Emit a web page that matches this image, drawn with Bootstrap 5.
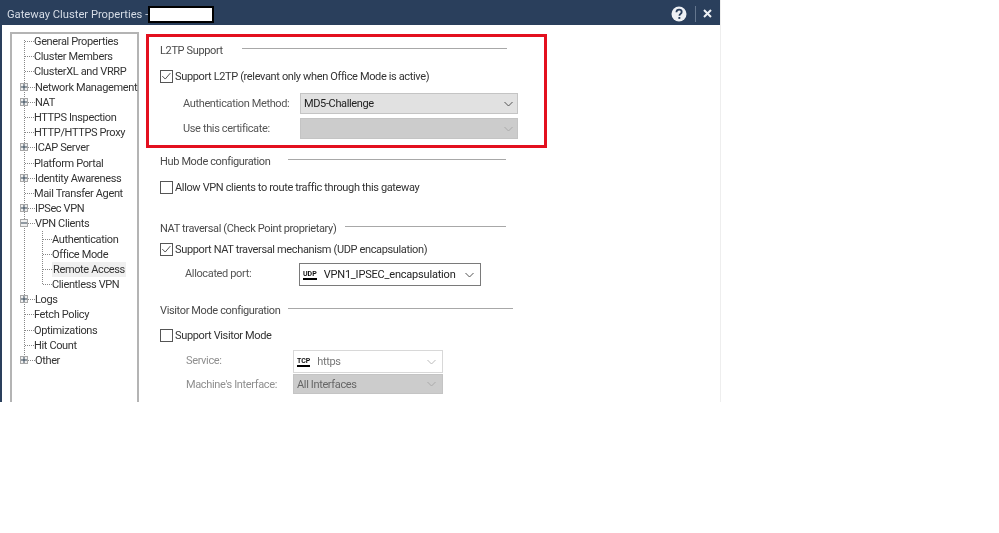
<!DOCTYPE html>
<html lang="en">
<head>
<meta charset="utf-8">
<title>Gateway Cluster Properties</title>
<link rel="stylesheet" href="https://cdn.jsdelivr.net/npm/bootstrap@5.3.0/dist/css/bootstrap.min.css">
<style>
html,body{background:#fff;margin:0;overflow:hidden}
body{font-family:Roboto,"Noto Sans",sans-serif;font-size:11px;color:#333;line-height:15px;letter-spacing:-.36px}
.gw-win{width:721px;height:402px;overflow:hidden;border-left:2px solid #2a3f5c;background:#fff;border-right:1px solid #eee;filter:blur(.35px)}
.gw-title{height:25px;background:#2a3f5c;color:#d5dce6;font-size:11.2px;letter-spacing:0;margin-left:-2px;padding-left:7px}
.gw-title-text{padding-top:3px}
.gw-redact{width:62px;height:13px;background:#fff;border:solid #000;border-width:2px;box-sizing:content-box;margin-left:0;margin-top:4px}
.gw-tools{margin-left:auto;margin-right:8px;padding-top:2px}
.gw-sep{width:1px;height:16px;background:#64768e;margin:0 7px 0 8px}
.gw-body{height:377px}
.gw-tree{width:129px;margin:7px 0 0 8px;border:solid #b4b4b4;border-width:2px 2px 0 2px;flex:none;position:relative}
.gw-vline{border-left:1px dotted #888;margin-left:12px;height:319px;position:absolute;top:6px;left:0}
.gw-node{height:15.2px;display:flex;align-items:center;position:relative;padding-left:13px;white-space:nowrap}
.gw-twig{width:9px;border-top:1px dotted #888;flex:none}
.gw-exp + .gw-twig{width:10px}
.gw-exp{position:absolute;left:8px;top:3px;width:8px;height:8px;background:#f0f0f0;border:1px solid #a8a8a8;display:flex;align-items:center;justify-content:center}
.gw-exp svg{display:block}
.gw-sub{position:relative}
.gw-sub .gw-node{padding-left:31px}
.gw-sub::before{content:"";position:absolute;left:30px;top:0;height:53px;border-left:1px dotted #888}
.gw-sel{background:#f0f0f0;padding:0 1px}
.gw-main{margin-left:7px;padding-top:9px;flex:1;min-width:0}
.gw-redbox{width:401px;height:114px;border:3px solid #e3101f;padding:6px 10px 0 11px}
.gw-head{display:flex;align-items:center;color:#4a4a4a;height:15px;white-space:nowrap}
.gw-head i{display:block;height:1px;background:#a8a8a8;flex:none;position:relative;top:-2px;margin-left:auto}
.gw-h-l2tp{width:347px}.gw-h-l2tp i{width:265px}
.gw-h-hub{width:346px}.gw-h-hub i{width:218px}
.gw-h-nat{width:346px}.gw-h-nat i{width:161px}
.gw-h-vis{width:353px}.gw-h-vis i{width:225px}
.gw-chk{width:13px;height:13px;border:1px solid #555;background:#fff;flex:none;margin-right:2px;display:block}
.gw-chkrow{display:flex;align-items:center;height:15px;color:#333;white-space:nowrap;margin-top:11px}
.gw-chkrow-tight{margin-top:6px}
.gw-chkrow-vis{margin-top:10px}
.gw-frow{display:flex;align-items:center;white-space:nowrap}
.gw-f-auth{margin-top:9px;padding-left:23px}
.gw-f-cert{margin-top:4px;padding-left:23px}
.gw-f-port{margin-top:6px;padding-left:25px}
.gw-f-serv{margin-top:7px;padding-left:26px}
.gw-f-mach{margin-top:1px;padding-left:26px}
.gw-lab{color:#555;flex:none}
.gw-lab-a{width:117px}
.gw-lab-b{width:114px;padding-bottom:3px}
.gw-lab-c{width:107px;padding-bottom:3px}
.gw-lab-d{width:107px}
.gw-sel-box{height:21px;border:1px solid #c8c8c8;display:flex;align-items:center;padding:0 3px;position:relative;flex:none;color:#222}
.gw-w-a{width:218px;padding-right:4px}.gw-w-b{width:182px;padding-right:6px}.gw-w-c{width:150px;padding-right:6px}
.gw-h20{height:20px}
.gw-sel-box svg.gw-ch{margin-left:auto;flex:none}
.gw-grey{background:#e1e1e1;border-color:#c4c4c4}
.gw-dis{background:#ccc;border-color:#c4c4c4;color:#666}
.gw-open{background:#fff;border-color:#7a7a7a;height:23px;letter-spacing:-.2px}
.gw-light{background:#fff;border-color:#d8d8d8;color:#777;height:23px}
.gw-proto{font-size:7px;font-weight:700;border-bottom:2px solid #000;line-height:8px;color:#111;margin-right:7px;flex:none;letter-spacing:0}
.gw-sec{padding-left:14px}
.gw-sec-hub{margin-top:6px}.gw-sec-nat{margin-top:26px}.gw-sec-vis{margin-top:17px}
.gw-faint{color:#8f8f8f}
</style>
</head>
<body>
<div class="gw-win d-flex flex-column">
  <div class="gw-title d-flex align-items-center">
    <span class="gw-title-text">Gateway Cluster Properties -</span><span class="gw-redact d-block"></span>
    <div class="gw-tools d-flex align-items-center">
      <svg width="16" height="16" viewBox="0 0 16 16"><circle cx="8" cy="8" r="7.5" fill="#eef1f5"/><path d="M5.4 6.2C5.5 4.6 6.6 3.7 8.1 3.7c1.5 0 2.6 .9 2.6 2.2 0 1-.6 1.5-1.3 2-.6.4-.9.8-.9 1.5v.3" fill="none" stroke="#2a3f5c" stroke-width="1.8"/><rect x="7.4" y="11" width="1.9" height="1.9" fill="#2a3f5c"/></svg>
      <span class="gw-sep"></span>
      <svg width="9" height="9" viewBox="0 0 9 9"><path d="M1 1l7 7M8 1l-7 7" stroke="#eef1f5" stroke-width="2"/></svg>
    </div>
  </div>
  <div class="gw-body d-flex">
    <div class="gw-tree">
      <div class="gw-vline"></div>
      <div class="gw-node"><span class="gw-twig"></span><span>General Properties</span></div>
      <div class="gw-node"><span class="gw-twig"></span><span>Cluster Members</span></div>
      <div class="gw-node"><span class="gw-twig"></span><span>ClusterXL and VRRP</span></div>
      <div class="gw-node"><span class="gw-exp"><svg width="6" height="6" viewBox="0 0 6 6"><path d="M0 3h6M3 0v6" stroke="#345" stroke-width="1"/></svg></span><span class="gw-twig"></span><span>Network Management</span></div>
      <div class="gw-node"><span class="gw-exp"><svg width="6" height="6" viewBox="0 0 6 6"><path d="M0 3h6M3 0v6" stroke="#345" stroke-width="1"/></svg></span><span class="gw-twig"></span><span>NAT</span></div>
      <div class="gw-node"><span class="gw-twig"></span><span>HTTPS Inspection</span></div>
      <div class="gw-node"><span class="gw-twig"></span><span>HTTP/HTTPS Proxy</span></div>
      <div class="gw-node"><span class="gw-exp"><svg width="6" height="6" viewBox="0 0 6 6"><path d="M0 3h6M3 0v6" stroke="#345" stroke-width="1"/></svg></span><span class="gw-twig"></span><span>ICAP Server</span></div>
      <div class="gw-node"><span class="gw-twig"></span><span>Platform Portal</span></div>
      <div class="gw-node"><span class="gw-exp"><svg width="6" height="6" viewBox="0 0 6 6"><path d="M0 3h6M3 0v6" stroke="#345" stroke-width="1"/></svg></span><span class="gw-twig"></span><span>Identity Awareness</span></div>
      <div class="gw-node"><span class="gw-twig"></span><span>Mail Transfer Agent</span></div>
      <div class="gw-node"><span class="gw-exp"><svg width="6" height="6" viewBox="0 0 6 6"><path d="M0 3h6M3 0v6" stroke="#345" stroke-width="1"/></svg></span><span class="gw-twig"></span><span>IPSec VPN</span></div>
      <div class="gw-node"><span class="gw-exp"><svg width="6" height="6" viewBox="0 0 6 6"><path d="M0 3h6" stroke="#345" stroke-width="1"/></svg></span><span class="gw-twig"></span><span>VPN Clients</span></div>
      <div class="gw-sub">
        <div class="gw-node"><span class="gw-twig"></span><span>Authentication</span></div>
        <div class="gw-node"><span class="gw-twig"></span><span>Office Mode</span></div>
        <div class="gw-node"><span class="gw-twig"></span><span class="gw-sel">Remote Access</span></div>
        <div class="gw-node"><span class="gw-twig"></span><span>Clientless VPN</span></div>
      </div>
      <div class="gw-node"><span class="gw-exp"><svg width="6" height="6" viewBox="0 0 6 6"><path d="M0 3h6M3 0v6" stroke="#345" stroke-width="1"/></svg></span><span class="gw-twig"></span><span>Logs</span></div>
      <div class="gw-node"><span class="gw-twig"></span><span>Fetch Policy</span></div>
      <div class="gw-node"><span class="gw-twig"></span><span>Optimizations</span></div>
      <div class="gw-node"><span class="gw-twig"></span><span>Hit Count</span></div>
      <div class="gw-node"><span class="gw-exp"><svg width="6" height="6" viewBox="0 0 6 6"><path d="M0 3h6M3 0v6" stroke="#345" stroke-width="1"/></svg></span><span class="gw-twig"></span><span>Other</span></div>
    </div>
    <div class="gw-main">
      <div class="gw-redbox">
        <div class="gw-head gw-h-l2tp"><span>L2TP Support</span><i></i></div>
        <div class="gw-chkrow"><svg class="gw-chk" viewBox="0 0 13 13"><path d="M1.5 6l3.5 3.5L11 2.5" fill="none" stroke="#444" stroke-width="1.1"/></svg><span>Support L2TP (relevant only when Office Mode is active)</span></div>
        <div class="gw-frow gw-f-auth">
          <span class="gw-lab gw-lab-a">Authentication Method:</span>
          <div class="gw-sel-box gw-grey gw-w-a"><span>MD5-Challenge</span><svg class="gw-ch" width="9" height="6" viewBox="0 0 9 6"><path d="M.5 1l4 4 4-4" fill="none" stroke="#555" stroke-width="1"/></svg></div>
        </div>
        <div class="gw-frow gw-f-cert">
          <span class="gw-lab gw-lab-a">Use this certificate:</span>
          <div class="gw-sel-box gw-dis gw-w-a"><svg class="gw-ch" width="9" height="6" viewBox="0 0 9 6"><path d="M.5 1l4 4 4-4" fill="none" stroke="#aaa" stroke-width="1"/></svg></div>
        </div>
      </div>
      <div class="gw-sec gw-sec-hub">
        <div class="gw-head gw-h-hub"><span>Hub Mode configuration</span><i></i></div>
        <div class="gw-chkrow"><span class="gw-chk"></span><span>Allow VPN clients to route traffic through this gateway</span></div>
      </div>
      <div class="gw-sec gw-sec-nat">
        <div class="gw-head gw-h-nat"><span>NAT traversal (Check Point proprietary)</span><i></i></div>
        <div class="gw-chkrow gw-chkrow-tight"><svg class="gw-chk" viewBox="0 0 13 13"><path d="M1.5 6l3.5 3.5L11 2.5" fill="none" stroke="#444" stroke-width="1.1"/></svg><span>Support NAT traversal mechanism (UDP encapsulation)</span></div>
        <div class="gw-frow gw-f-port">
          <span class="gw-lab gw-lab-b">Allocated port:</span>
          <div class="gw-sel-box gw-open gw-w-b"><span class="gw-proto">UDP</span><span>VPN1_IPSEC_encapsulation</span><svg class="gw-ch" width="9" height="6" viewBox="0 0 9 6"><path d="M.5 1l4 4 4-4" fill="none" stroke="#555" stroke-width="1"/></svg></div>
        </div>
      </div>
      <div class="gw-sec gw-sec-vis">
        <div class="gw-head gw-h-vis"><span>Visitor Mode configuration</span><i></i></div>
        <div class="gw-chkrow gw-chkrow-vis"><span class="gw-chk"></span><span>Support Visitor Mode</span></div>
        <div class="gw-frow gw-faint gw-f-serv">
          <span class="gw-lab-c flex-none">Service:</span>
          <div class="gw-sel-box gw-light gw-w-c"><span class="gw-proto">TCP</span><span>https</span><svg class="gw-ch" width="9" height="6" viewBox="0 0 9 6"><path d="M.5 1l4 4 4-4" fill="none" stroke="#bbb" stroke-width="1"/></svg></div>
        </div>
        <div class="gw-frow gw-faint gw-f-mach">
          <span class="gw-lab-d flex-none">Machine's Interface:</span>
          <div class="gw-sel-box gw-dis gw-w-c gw-h20"><span>All Interfaces</span><svg class="gw-ch" width="9" height="6" viewBox="0 0 9 6"><path d="M.5 1l4 4 4-4" fill="none" stroke="#aaa" stroke-width="1"/></svg></div>
        </div>
      </div>
    </div>
  </div>
</div>
<script src="https://cdn.jsdelivr.net/npm/bootstrap@5.3.0/dist/js/bootstrap.bundle.min.js"></script>
</body>
</html>
